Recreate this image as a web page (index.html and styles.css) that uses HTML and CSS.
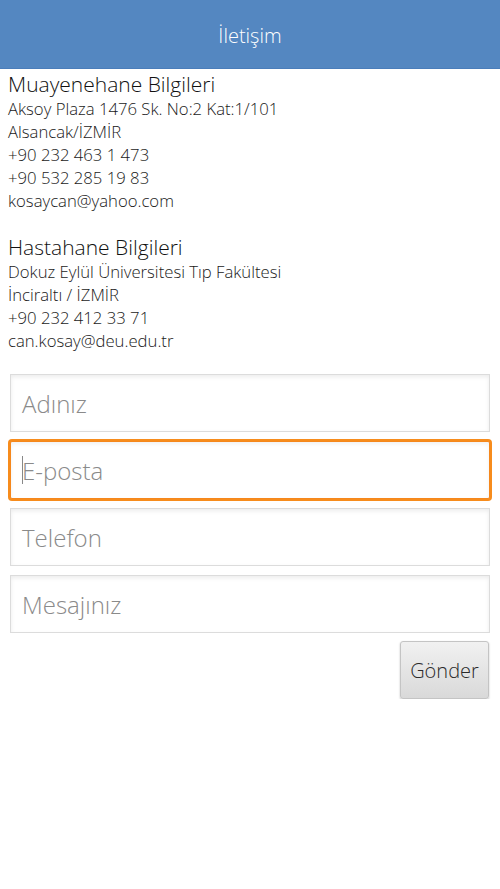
FILE: index.html
```html
<!DOCTYPE html>
<html lang="tr">
<head>
<meta charset="utf-8">
<title>İletişim</title>
<link rel="stylesheet" href="styles.css">
</head>
<body>
<header class="topbar"><h1 class="title">İletişim</h1></header>
<main class="content">
  <section class="info">
    <h2 class="info-title">Muayenehane Bilgileri</h2>
    <p class="info-line">Aksoy Plaza 1476 Sk. No:2 Kat:1/101</p>
    <p class="info-line">Alsancak/İZMİR</p>
    <p class="info-line">+90 232 463 1 473</p>
    <p class="info-line">+90 532 285 19 83</p>
    <p class="info-line">kosaycan@yahoo.com</p>
  </section>
  <section class="info second">
    <h2 class="info-title">Hastahane Bilgileri</h2>
    <p class="info-line">Dokuz Eylül Üniversitesi Tıp Fakültesi</p>
    <p class="info-line">İnciraltı / İZMİR</p>
    <p class="info-line">+90 232 412 33 71</p>
    <p class="info-line">can.kosay@deu.edu.tr</p>
  </section>
  <form class="form">
    <div class="field"><span class="ph">Adınız</span></div>
    <div class="field focused"><span class="caret"></span><span class="ph">E-posta</span></div>
    <div class="field"><span class="ph">Telefon</span></div>
    <div class="field"><span class="ph">Mesajınız</span></div>
    <div class="actions"><button type="button" class="send">Gönder</button></div>
  </form>
</main>
</body>
</html>
```

FILE: styles.css
```css
* { box-sizing: border-box; }
html, body { margin: 0; padding: 0; background: #fff; }
body { font-family: "Open Sans", "Liberation Sans", sans-serif; color: #222; }

.topbar {
  height: 69px;
  background: #5487c1;
  border-bottom: 1px solid #4a7dba;
  display: flex;
  align-items: center;
  justify-content: center;
}
.title {
  margin: 0;
  font-size: 20px;
  font-weight: 300;
  color: #fff;
  padding-top: 2px;
}

.content { padding: 2px 0 0 0; }
.info { padding: 0 8px; }
.info.second { margin-top: 22px; }
.info-title {
  margin: 0;
  font-size: 21px;
  font-weight: 300;
  line-height: 26px;
  color: #111;
}
.info-line {
  margin: 0;
  font-size: 16.7px;
  font-weight: 300;
  line-height: 23px;
  color: #1a1a1a;
}

.form {
  padding: 22px 10px 0 10px;
  display: flex;
  flex-direction: column;
  gap: 9px;
}
.field {
  height: 58px;
  border: 1px solid #dcdcdc;
  background: #fff;
  box-shadow: inset 0 2px 4px rgba(0,0,0,0.08);
  display: flex;
  align-items: center;
  padding-left: 11px;
}
.field.focused {
  border: 1px solid #f5871c;
  border-radius: 2px;
  box-shadow: 0 0 0 2px #f78c1c, inset 0 2px 4px rgba(0,0,0,0.06);
}
.caret {
  width: 1px;
  height: 28px;
  background: #888;
  margin-right: -1px;
}
.ph {
  font-size: 24px;
  font-weight: 300;
  color: #8a8a8a;
}
.actions {
  display: flex;
  justify-content: flex-end;
  padding-right: 1px;
  margin-top: -1px;
}
.send {
  width: 89px;
  height: 58px;
  border: 1px solid #c4c4c4;
  border-radius: 3px;
  background: linear-gradient(#f1f1f1, #d9d9d9);
  box-shadow: 0 1px 2px rgba(0,0,0,0.25);
  font-family: "Open Sans", "Liberation Sans", sans-serif;
  font-size: 20px;
  font-weight: 300;
  color: #2a2a2a;
  padding: 0;
}
```
